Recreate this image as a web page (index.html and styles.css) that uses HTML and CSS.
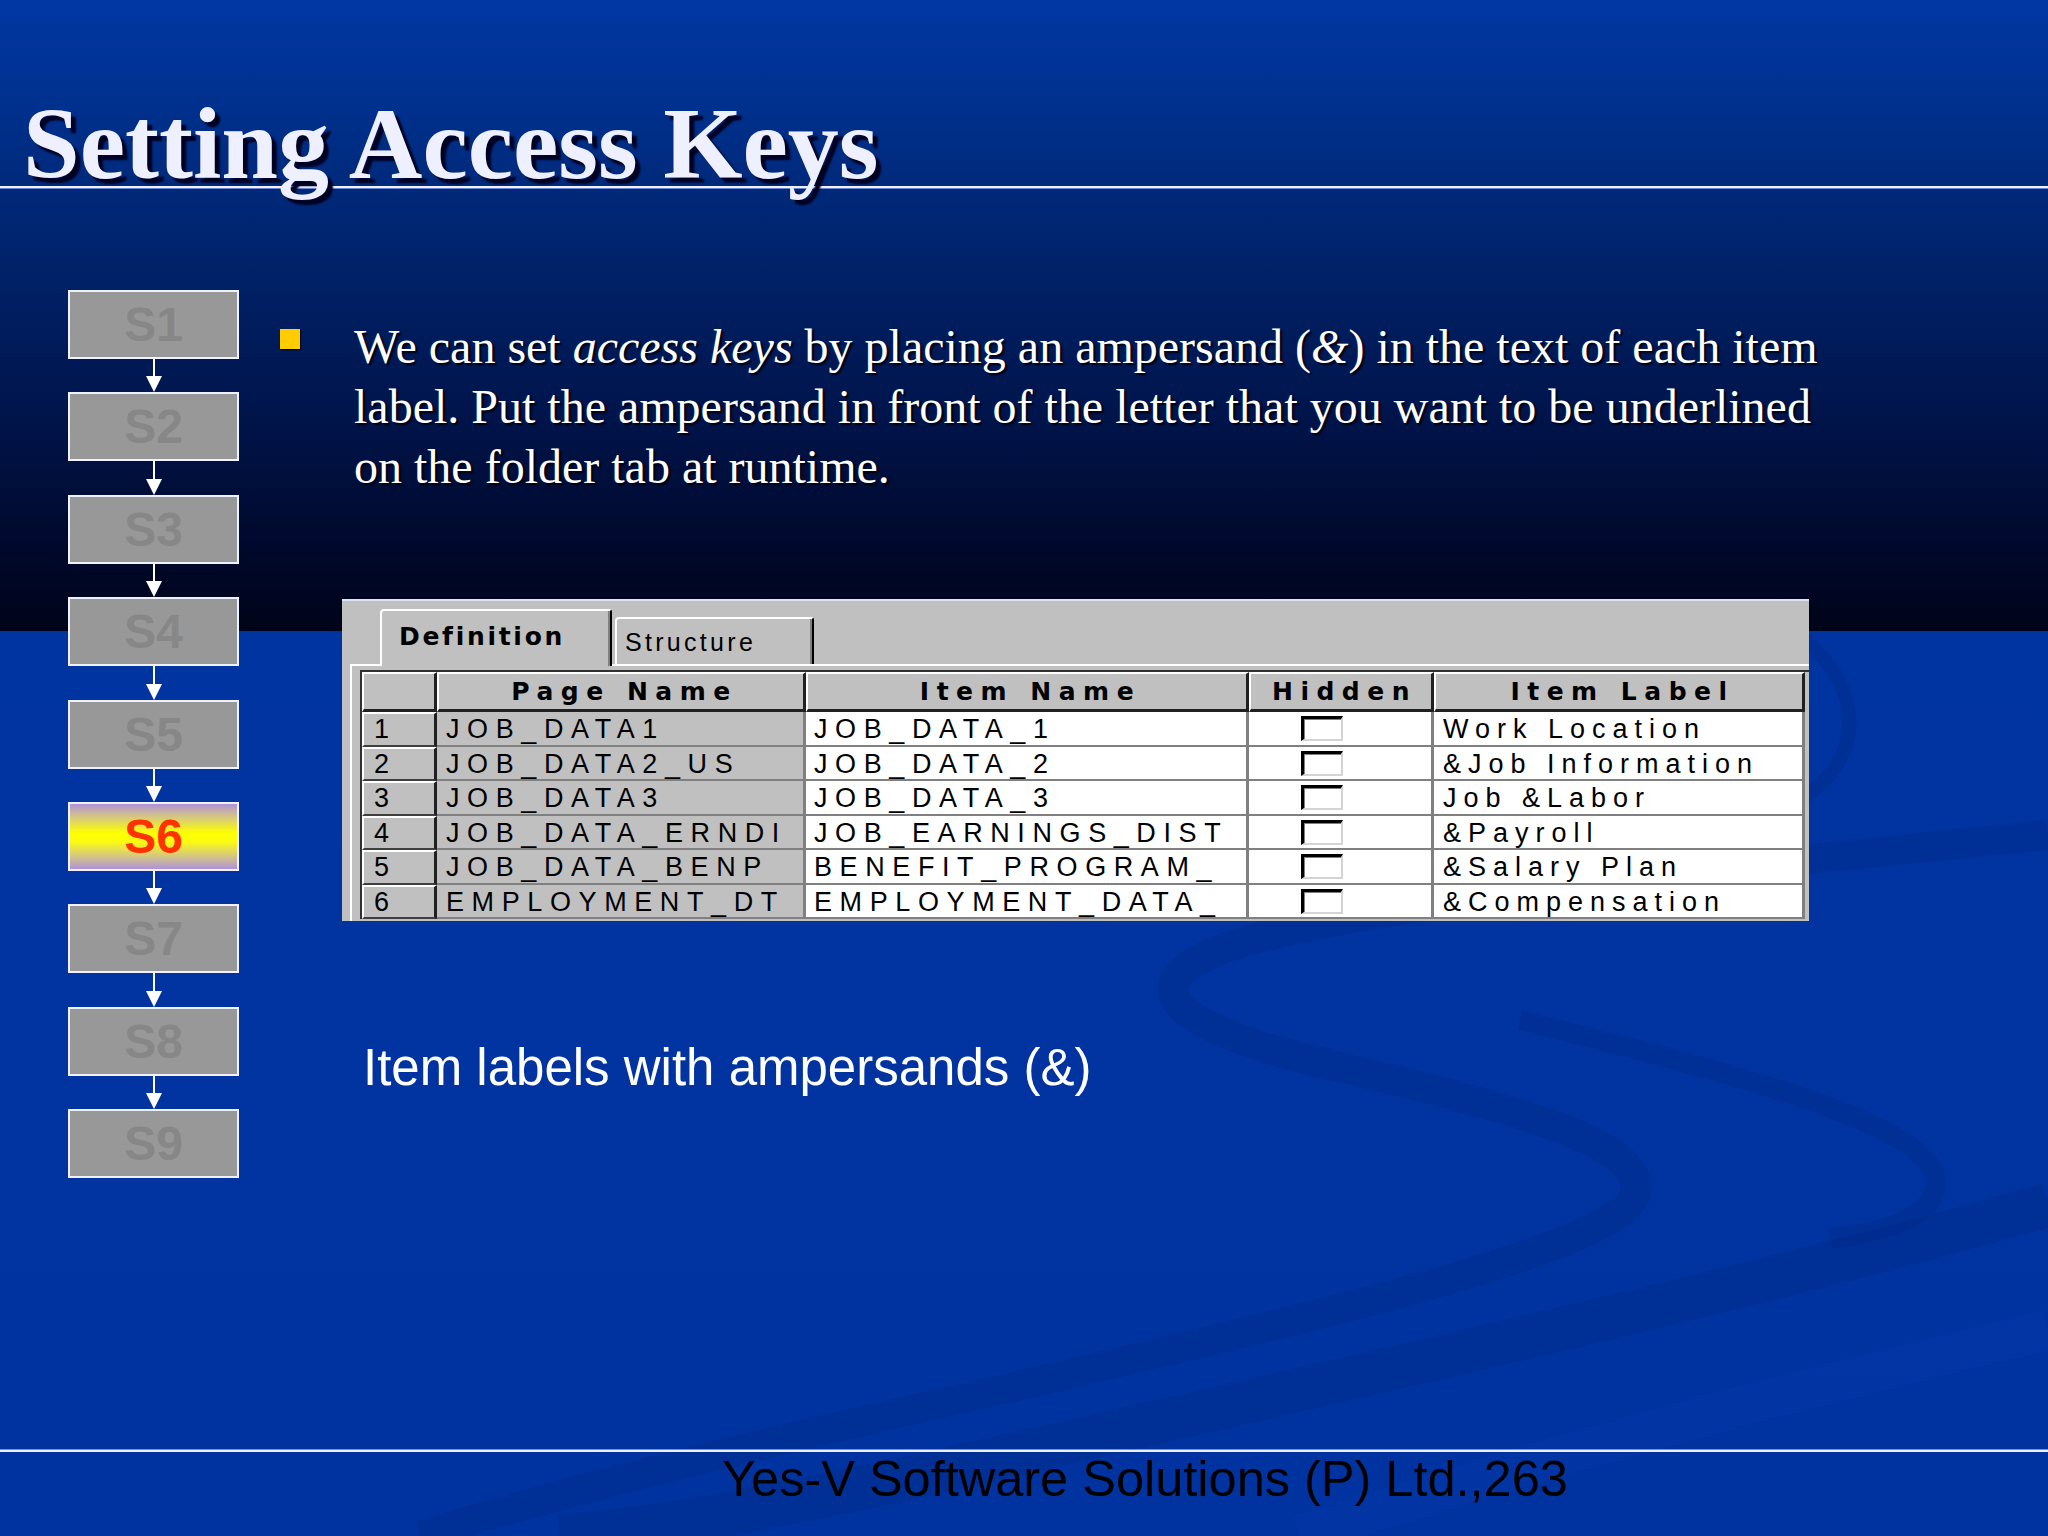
FILE: index.html
```html
<!DOCTYPE html>
<html lang="en">
<head>
<meta charset="utf-8">
<title>Setting Access Keys</title>
<link rel="stylesheet" href="styles.css">
</head>
<body>
<div class="slide">
  <svg class="swoosh" width="2048" height="1536" viewBox="0 0 2048 1536" aria-hidden="true">
    <path d="M2048,835 C1800,860 1420,895 1250,940 C1130,975 1150,1020 1310,1060 C1500,1105 1650,1140 1635,1195 C1615,1250 1300,1320 1000,1390 C800,1435 600,1480 420,1536" fill="none" stroke="#00287f" stroke-width="30" stroke-opacity="0.3"/>
    <path d="M2048,1205 C1750,1290 1300,1390 900,1480 C760,1510 650,1530 560,1536" fill="none" stroke="#00287f" stroke-width="44" stroke-opacity="0.28"/>
    <path d="M1520,1020 C1760,1080 1950,1130 1935,1190 C1925,1222 1880,1232 1830,1238" fill="none" stroke="#00287f" stroke-width="20" stroke-opacity="0.28"/>
    <path d="M1805,640 C1865,690 1865,760 1800,800" fill="none" stroke="#00287f" stroke-width="14" stroke-opacity="0.28"/>
    <path d="M1300,1536 C1500,1470 1750,1400 2048,1330" fill="none" stroke="#0a40b0" stroke-width="40" stroke-opacity="0.2"/>
  </svg>

  <header class="title-bar">
    <h1 class="title">Setting Access Keys</h1>
  </header>

  <main class="main">
    <nav class="steps">
      <div class="step">S1</div>
      <div class="arrow"><span class="stem"></span><span class="head"></span></div>
      <div class="step">S2</div>
      <div class="arrow"><span class="stem"></span><span class="head"></span></div>
      <div class="step">S3</div>
      <div class="arrow"><span class="stem"></span><span class="head"></span></div>
      <div class="step">S4</div>
      <div class="arrow"><span class="stem"></span><span class="head"></span></div>
      <div class="step">S5</div>
      <div class="arrow"><span class="stem"></span><span class="head"></span></div>
      <div class="step current">S6</div>
      <div class="arrow"><span class="stem"></span><span class="head"></span></div>
      <div class="step">S7</div>
      <div class="arrow"><span class="stem"></span><span class="head"></span></div>
      <div class="step">S8</div>
      <div class="arrow"><span class="stem"></span><span class="head"></span></div>
      <div class="step">S9</div>
    </nav>

    <section class="content">
      <div class="bullet-item">
        <span class="bullet"></span>
        <p class="text">We can set <i>access keys</i> by placing an ampersand (<i class="amp">&amp;</i>) in the text of each item<br>label. Put the ampersand in front of the letter that you want to be underlined<br>on the folder tab at runtime.</p>
      </div>

      <div class="app">
        <div class="tabs">
          <div class="tab active">Definition</div>
          <div class="tab">Structure</div>
        </div>
        <div class="tab-body">
          <div class="grid">
            <div class="hc"></div>
            <div class="hc">Page Name</div>
            <div class="hc">Item Name</div>
            <div class="hc">Hidden</div>
            <div class="hc">Item Label</div>

            <div class="c rn">1</div><div class="c pn">JOB_DATA1</div><div class="c w">JOB_DATA_1</div><div class="c w hid"><span class="cb"></span></div><div class="c w lbl">Work Location</div>
            <div class="c rn">2</div><div class="c pn">JOB_DATA2_US</div><div class="c w">JOB_DATA_2</div><div class="c w hid"><span class="cb"></span></div><div class="c w lbl">&amp;Job Information</div>
            <div class="c rn">3</div><div class="c pn">JOB_DATA3</div><div class="c w">JOB_DATA_3</div><div class="c w hid"><span class="cb"></span></div><div class="c w lbl">Job &amp;Labor</div>
            <div class="c rn">4</div><div class="c pn">JOB_DATA_ERNDI</div><div class="c w">JOB_EARNINGS_DIST</div><div class="c w hid"><span class="cb"></span></div><div class="c w lbl">&amp;Payroll</div>
            <div class="c rn">5</div><div class="c pn">JOB_DATA_BENP</div><div class="c w">BENEFIT_PROGRAM_</div><div class="c w hid"><span class="cb"></span></div><div class="c w lbl">&amp;Salary Plan</div>
            <div class="c rn">6</div><div class="c pn">EMPLOYMENT_DT</div><div class="c w">EMPLOYMENT_DATA_</div><div class="c w hid"><span class="cb"></span></div><div class="c w lbl">&amp;Compensation</div>
          </div>
        </div>
      </div>

      <p class="caption">Item labels with ampersands (&amp;)</p>
    </section>
  </main>

  <footer class="footer">
    <span class="footer-text">Yes-V Software Solutions (P) Ltd.,263</span>
  </footer>
</div>
</body>
</html>
```

FILE: styles.css
```css
html, body {
  margin: 0;
  padding: 0;
}

body {
  width: 2048px;
  height: 1536px;
  overflow: hidden;
  background: #0033a0;
}

.slide {
  position: relative;
  width: 2048px;
  height: 1536px;
  overflow: hidden;
  display: flex;
  flex-direction: column;
  background: linear-gradient(to bottom,
    #0037a3 0px,
    #00318f 100px,
    #002877 200px,
    #001f62 300px,
    #00144a 420px,
    #000a30 530px,
    #000419 631px,
    #0034a0 631px,
    #0033a0 1536px);
}

.swoosh {
  position: absolute;
  left: 0;
  top: 0;
  z-index: 0;
  pointer-events: none;
}

/* Title */
.title-bar {
  position: relative;
  z-index: 1;
  height: 186px;
  border-bottom: 2px solid #eef2ff;
  box-shadow: 0 1px 0 #6c84d4;
  flex: none;
}

.title {
  margin: 0;
  padding: 94px 0 0 23px;
  font-family: "Liberation Serif", "Times New Roman", serif;
  font-weight: bold;
  font-size: 102px;
  line-height: 100px;
  color: #eef0ff;
  text-shadow: 5px 5px 2px #000022;
  white-space: nowrap;
}

/* Main */
.main {
  position: relative;
  z-index: 1;
  flex: 1;
  display: flex;
  align-items: flex-start;
  padding-top: 102px;
}

.steps {
  width: 171px;
  margin-left: 68px;
  display: flex;
  flex-direction: column;
  flex: none;
}

.step {
  height: 69px;
  box-sizing: border-box;
  border: 2px solid #eef2ff;
  background: #989898;
  display: flex;
  align-items: center;
  justify-content: center;
  font-family: "Liberation Sans", Arial, sans-serif;
  font-weight: bold;
  font-size: 48px;
  color: #878787;
}

.step.current {
  background: linear-gradient(to bottom,
    #b092d8 0%,
    #d9cc78 22%,
    #ffff00 45%,
    #fbfb10 58%,
    #d9cc78 78%,
    #b092d8 100%);
  color: #ff3300;
}

.arrow {
  height: 33.4px;
  display: flex;
  flex-direction: column;
  align-items: center;
}

.stem {
  width: 2px;
  flex: 1;
  background: #ffffff;
}

.head {
  width: 0;
  height: 0;
  border-left: 8.5px solid transparent;
  border-right: 8.5px solid transparent;
  border-top: 16px solid #ffffff;
}

/* Content */
.content {
  margin-left: 41px;
  display: flex;
  flex-direction: column;
  align-items: flex-start;
}

.bullet-item {
  display: flex;
  align-items: flex-start;
  margin-top: 27px;
}

.bullet {
  width: 20px;
  height: 20px;
  margin-top: 12px;
  background: #ffcc00;
  box-shadow: 1px 1px 1px #000;
  flex: none;
}

.text {
  margin: 0 0 0 54px;
  font-family: "Liberation Serif", "Times New Roman", serif;
  font-size: 48px;
  line-height: 60px;
  color: #ffffff;
  white-space: nowrap;
  text-shadow: 2px 2px 2px #000010;
}

.amp {
  font-style: italic;
}

/* Application screenshot */
.app {
  margin: 102px 0 0 62px;
  width: 1467px;
  height: 322px;
  box-sizing: border-box;
  background: #c0c0c0;
  border-top: 2px solid #dfe2f2;
  overflow: hidden;
}

.tabs {
  height: 63px;
  display: flex;
  align-items: flex-end;
  padding-left: 38px;
}

.tab {
  box-sizing: border-box;
  background: #c0c0c0;
  border-top: 2px solid #ffffff;
  border-left: 2px solid #ffffff;
  border-right: 2px solid #000000;
  box-shadow: inset -2px 0 0 #808080;
  border-top-left-radius: 4px;
  border-top-right-radius: 3px;
  color: #000;
  white-space: nowrap;
}

.tab.active {
  position: relative;
  z-index: 2;
  width: 232px;
  height: 57px;
  margin-bottom: -2px;
  padding: 11px 0 0 17px;
  font-family: "DejaVu Sans", Verdana, sans-serif;
  font-weight: bold;
  font-size: 25px;
  line-height: 30px;
  letter-spacing: 2.7px;
}

.tab + .tab {
  width: 199px;
  height: 47px;
  margin-left: 3px;
  padding: 8px 0 0 8px;
  font-family: "Liberation Sans", Arial, sans-serif;
  font-size: 25px;
  line-height: 30px;
  letter-spacing: 3.3px;
}

.tab-body {
  margin-left: 8px;
  border-top: 2px solid #ffffff;
  border-left: 2px solid #ffffff;
  padding: 4px 0 0 8px;
  height: 400px;
}

.grid {
  display: grid;
  grid-template-columns: 75px 369px 443px 185px 371px 40px;
  grid-auto-rows: 34.5px;
  grid-template-rows: 40px;
  width: max-content;
  border-top: 2px solid #303030;
  border-left: 2px solid #303030;
  background: #c0c0c0;
}

.hc {
  box-sizing: border-box;
  height: 40px;
  background: #c0c0c0;
  border-top: 2px solid #ffffff;
  border-left: 2px solid #ffffff;
  border-right: 3px solid #202020;
  border-bottom: 3px solid #202020;
  padding: 3px 0 0 7px;
  text-align: center;
  font-family: "DejaVu Sans", Verdana, sans-serif;
  font-weight: bold;
  font-size: 25px;
  line-height: 30px;
  letter-spacing: 7.5px;
  color: #000;
  white-space: nowrap;
  overflow: hidden;
}

.grid > .hc:nth-child(5) {
  grid-column: span 2;
  margin-right: 40px;
}

.c {
  box-sizing: border-box;
  height: 34.5px;
  border-bottom: 2px solid #808080;
  border-right: 3px solid #808080;
  padding: 2px 0 0 10px;
  font-family: "Liberation Sans", Arial, sans-serif;
  font-size: 27px;
  line-height: 30px;
  letter-spacing: 7.6px;
  color: #000;
  white-space: nowrap;
  overflow: hidden;
}

.c.rn {
  background: #c0c0c0;
  border-top: 2px solid #ffffff;
  border-left: 2px solid #ffffff;
  border-right: 3px solid #202020;
  border-bottom: 2px solid #404040;
  padding: 0 0 0 10px;
}

.c.pn {
  background: #c0c0c0;
  padding-left: 9px;
}

.c.w {
  background: #ffffff;
  padding-left: 8px;
}

.c.lbl {
  grid-column: span 2;
  margin-right: 40px;
  padding-left: 9px;
  letter-spacing: 7px;
}

.c.hid {
  padding: 4px 0 0 52px;
}

.cb {
  display: block;
  width: 42px;
  height: 25px;
  box-sizing: border-box;
  background: #ffffff;
  border-top: 3px solid #000000;
  border-left: 3px solid #000000;
  border-right: 2px solid #d4d4d4;
  border-bottom: 2px solid #d4d4d4;
  box-shadow: inset 1px 1px 0 #808080;
}

/* Caption */
.caption {
  margin: 117px 0 0 83px;
  font-family: "Liberation Sans", Arial, sans-serif;
  font-size: 51px;
  line-height: 60px;
  color: #ffffff;
  white-space: nowrap;
}

/* Footer */
.footer {
  position: relative;
  z-index: 1;
  flex: none;
  height: 86px;
  box-sizing: border-box;
  border-top: 2px solid #eaf0ff;
  box-shadow: 0 -1px 0 #7090e0;
  padding: 2px 0 0 722px;
}

.footer-text {
  font-family: "Liberation Sans", Arial, sans-serif;
  font-size: 50.5px;
  line-height: 50px;
  color: #000000;
  white-space: nowrap;
}
```
